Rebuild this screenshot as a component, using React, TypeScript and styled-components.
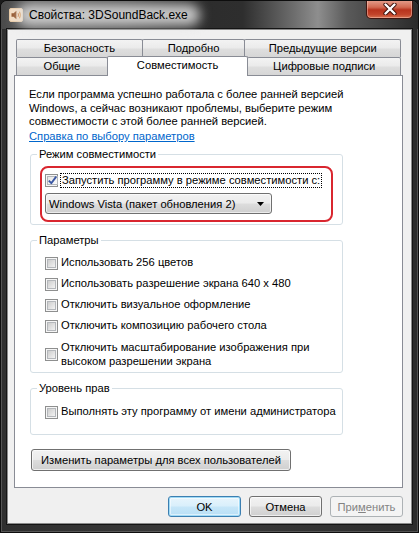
import React from "react";
import styled, { createGlobalStyle, css } from "styled-components";

const UI_FONT = `"Liberation Sans", Arial, sans-serif`;
const UI_SIZE = "11.2px";

const GlobalStyle = createGlobalStyle`
  html, body { margin: 0; padding: 0; background: #1b1b1b; }
  body { width: 419px; height: 533px; overflow: hidden; }
  #root { width: 419px; height: 533px; }
`;

/* ---------- window frame ---------- */

const Window = styled.div`
  width: 419px;
  height: 533px;
  box-sizing: border-box;
  display: flex;
  flex-direction: column;
  font-family: ${UI_FONT};
  font-size: ${UI_SIZE};
  color: #000;
  white-space: nowrap;
  background: linear-gradient(90deg, #2f2f2f 0%, #3a3a3a 50%, #2c2c2c 100%);
  border: 1px solid #0d0d0d;
  border-radius: 7px 7px 0 0;
  box-shadow: inset 0 0 0 1px rgba(255, 255, 255, 0.18);
  overflow: hidden;
`;

const TitleBar = styled.div`
  height: 28px;
  flex: none;
  display: flex;
  align-items: center;
  padding-left: 8px;
  background: linear-gradient(
    90deg,
    #4a4a4a 0%,
    #5c5c5c 8%,
    #4a4a4a 30%,
    #2c2c2c 46%,
    #2e2e2e 58%,
    #6c6c6c 70%,
    #8e8e8e 76%,
    #5a5a5a 83%,
    #2a2a2a 100%
  );
`;

const Caption = styled.span`
  position: relative;
  z-index: 0;
  margin-left: 6px;
  font-size: 12px;
  color: #000;
  &::before {
    content: "";
    position: absolute;
    inset: -4px -12px;
    z-index: -1;
    border-radius: 10px;
    background: rgba(225, 225, 225, 0.85);
    filter: blur(6px);
  }
`;

const CloseButton = styled.div`
  margin-left: auto;
  margin-right: 5px;
  align-self: flex-start;
  margin-top: -1px;
  width: 47px;
  height: 19px;
  box-sizing: border-box;
  border: 1px solid #3f1610;
  border-top: none;
  border-radius: 0 0 5px 5px;
  background: linear-gradient(#e6a18f 0%, #d26a52 40%, #b8331d 55%, #c2432a 80%, #d5704f 100%);
  box-shadow: inset 0 0 0 1px rgba(255, 210, 200, 0.45);
  display: flex;
  align-items: center;
  justify-content: center;
`;

/* ---------- client area ---------- */

const Client = styled.div`
  flex: 1;
  margin: 0 6px 8px 6px;
  border: 1px solid #8a8a8a;
  box-shadow: 0 0 0 1px #141414;
  background: #f0f0f0;
  display: flex;
  flex-direction: column;
`;

const TabStrip = styled.div`
  margin: 9px 0 0 8px;
  width: 385px;
  display: flex;
  flex-direction: column;
`;

const TabRow = styled.div`
  display: flex;
  height: 18px;
  align-items: flex-start;
`;

const Tab = styled.div<{ $w: number; $active?: boolean }>`
  box-sizing: border-box;
  width: ${(p) => p.$w}px;
  height: 18px;
  margin-left: -1px;
  &:first-child {
    margin-left: 0;
  }
  border: 1px solid #898c95;
  border-bottom: none;
  border-radius: 2px 2px 0 0;
  background: linear-gradient(#f3f3f3 0%, #ebebeb 45%, #dedede 55%, #d6d6d6 100%);
  display: flex;
  align-items: center;
  justify-content: center;
  padding-bottom: 1px;
  ${(p) =>
    p.$active &&
    css`
      position: relative;
      z-index: 1;
      height: 20px;
      margin-top: -1px;
      background: #fff;
      padding-bottom: 4px;
    `}
`;

const Panel = styled.div`
  margin-left: 6px;
  width: 389px;
  height: 413px;
  box-sizing: border-box;
  border: 1px solid #898c95;
  background: #fff;
  padding: 12px 0 0 14px;
  display: flex;
  flex-direction: column;
  align-items: flex-start;
`;

const Intro = styled.p`
  margin: 0;
  line-height: 13.5px;
`;

const HelpLink = styled.a`
  margin-top: 1.5px;
  line-height: 13.5px;
  color: #0066cc;
  text-decoration: underline;
  cursor: pointer;
`;

const Group = styled.fieldset<{ $top: number }>`
  margin: ${(p) => p.$top}px 0 0 1px;
  padding: 0;
  width: 313px;
  box-sizing: border-box;
  min-width: 0;
  border: 1px solid #d5dfe5;
  border-radius: 3px;
`;

const GroupTitle = styled.legend`
  margin-left: 6px;
  padding: 0 2px;
  line-height: 13.5px;
`;

const GroupBody = styled.div<{ $pt: number; $pb: number }>`
  display: flex;
  flex-direction: column;
  gap: 7px;
  padding: ${(p) => p.$pt}px 0 ${(p) => p.$pb}px 14px;
`;

const Highlight = styled.div`
  margin: 5px 9px 2px 9px;
  border: 2px solid #d9262f;
  border-radius: 8px;
  padding: 5px 0 6px 3px;
  display: flex;
  flex-direction: column;
  gap: 6px;
`;

const Row = styled.label<{ $tall?: boolean }>`
  display: flex;
  align-items: center;
  gap: 3px;
  height: ${(p) => (p.$tall ? "27px" : "14px")};
  line-height: 13.5px;
  ${(p) =>
    p.$tall &&
    css`
      margin-top: 1px;
    `}
`;

const FocusText = styled.span`
  margin-left: -1px;
  padding: 0 1px;
  border: 1px dotted #000;
  line-height: 13px;
`;

const CheckOuter = styled.span`
  flex: none;
  width: 13px;
  height: 13px;
  box-sizing: border-box;
  border: 1px solid #8e8f8f;
  padding: 1px;
  background: #f6f6f6;
  display: flex;
`;

const CheckInner = styled.span<{ $checked?: boolean }>`
  flex: 1;
  box-sizing: border-box;
  border: 1px solid #b4b7bb;
  background: ${(p) =>
    p.$checked
      ? "linear-gradient(135deg, #e6e6e6, #fbfbfb)"
      : "linear-gradient(135deg, #cdcdcd 0%, #e2e2e2 55%, #f3f3f3 100%)"};
  display: flex;
  align-items: center;
  justify-content: center;
`;

const Select = styled.div`
  width: 227px;
  height: 21px;
  box-sizing: border-box;
  border: 1px solid #707070;
  border-radius: 3px;
  background: linear-gradient(#f2f2f2 0%, #ebebeb 49%, #dddddd 51%, #cfcfcf 100%);
  box-shadow: inset 0 0 0 1px rgba(255, 255, 255, 0.6);
  display: flex;
  align-items: center;
  justify-content: space-between;
  padding: 0 3px 0 3px;
`;

const buttonBase = css`
  box-sizing: border-box;
  height: 21px;
  border: 1px solid #707070;
  border-radius: 3px;
  background: linear-gradient(#f2f2f2 0%, #ebebeb 49%, #dddddd 51%, #cfcfcf 100%);
  box-shadow: inset 0 0 0 1px rgba(255, 255, 255, 0.65);
  font-family: ${UI_FONT};
  font-size: ${UI_SIZE};
  color: #000;
  padding: 0;
  display: flex;
  align-items: center;
  justify-content: center;
`;

const WideButton = styled.button`
  ${buttonBase};
  height: 22px;
  width: 260px;
  margin: 14px 0 0 2px;
`;

const Footer = styled.div`
  margin-top: 8px;
  padding-right: 8px;
  display: flex;
  justify-content: flex-end;
  gap: 8px;
`;

const DialogButton = styled.button<{ $variant?: "default" | "disabled" }>`
  ${buttonBase};
  width: 73px;
  ${(p) =>
    p.$variant === "default" &&
    css`
      border-color: #3c7fb1;
      background: linear-gradient(#e8f5fc 0%, #d9effb 48%, #c6e6f8 52%, #b8dff5 100%);
      box-shadow: inset 0 0 0 1px #9fdaf6, inset 0 0 0 2px rgba(255, 255, 255, 0.5);
    `}
  ${(p) =>
    p.$variant === "disabled" &&
    css`
      border-color: #adb2b5;
      background: #f4f4f4;
      box-shadow: none;
      color: #838383;
    `}
`;

const AccessKey = styled.span`
  text-decoration: underline;
`;

/* ---------- small drawings ---------- */

const SpeakerIcon = () => (
  <svg width="14" height="14" viewBox="0 0 14 14">
    <rect x="0.5" y="0.5" width="13" height="13" rx="1.5" fill="#f4dcc0" stroke="#e8c9a4" />
    <path d="M2.5 5.2 H4.6 L7.4 2.8 V11.2 L4.6 8.8 H2.5 Z" fill="#8d4a1c" />
    <path d="M9 5.2 Q10.2 7 9 8.8" fill="none" stroke="#c8681e" strokeWidth="1.1" />
    <path d="M10.4 3.8 Q12.4 7 10.4 10.2" fill="none" stroke="#d9822c" strokeWidth="1.1" />
  </svg>
);

const CloseGlyph = () => (
  <svg width="14" height="12" viewBox="0 0 14 12">
    <path
      d="M2.5 1.5 L11.5 10.5 M11.5 1.5 L2.5 10.5"
      stroke="#3a0e08"
      strokeWidth="4.2"
      strokeLinecap="round"
    />
    <path
      d="M2.5 1.5 L11.5 10.5 M11.5 1.5 L2.5 10.5"
      stroke="#ffffff"
      strokeWidth="2.4"
      strokeLinecap="round"
    />
  </svg>
);

const CheckMark = () => (
  <svg width="9" height="9" viewBox="0 0 9 9" style={{ overflow: "visible" }}>
    <path
      d="M0.8 4.6 L3.3 7.2 L8.2 0.6"
      fill="none"
      stroke="#3a57a3"
      strokeWidth="1.9"
      strokeLinejoin="round"
    />
  </svg>
);

const DropArrow = () => (
  <svg width="7" height="4" viewBox="0 0 7 4">
    <path d="M0 0 H7 L3.5 4 Z" fill="#000" />
  </svg>
);

const ArrowSlot = styled.span`
  width: 12px;
  display: flex;
  justify-content: center;
  margin-right: 2px;
`;

const CheckBox = ({ checked }: { checked?: boolean }) => (
  <CheckOuter>
    <CheckInner $checked={checked}>{checked && <CheckMark />}</CheckInner>
  </CheckOuter>
);

/* ---------- data ---------- */

const topTabs = [
  { label: "Безопасность", w: 127 },
  { label: "Подробно", w: 104 },
  { label: "Предыдущие версии", w: 157 },
];

const bottomTabs = [
  { label: "Общие", w: 92 },
  { label: "Совместимость", w: 142, active: true },
  { label: "Цифровые подписи", w: 154 },
];

const settings = [
  "Использовать 256 цветов",
  "Использовать разрешение экрана 640 x 480",
  "Отключить визуальное оформление",
  "Отключить композицию рабочего стола",
];

export default function App() {
  return (
    <>
      <GlobalStyle />
      <Window>
        <TitleBar>
          <SpeakerIcon />
          <Caption>Свойства: 3DSoundBack.exe</Caption>
          <CloseButton>
            <CloseGlyph />
          </CloseButton>
        </TitleBar>

        <Client>
          <TabStrip>
            <TabRow>
              {topTabs.map((t) => (
                <Tab key={t.label} $w={t.w}>
                  {t.label}
                </Tab>
              ))}
            </TabRow>
            <TabRow>
              {bottomTabs.map((t) => (
                <Tab key={t.label} $w={t.w} $active={t.active}>
                  {t.label}
                </Tab>
              ))}
            </TabRow>
          </TabStrip>

          <Panel>
            <Intro>
              Если программа успешно работала с более ранней версией
              <br />
              Windows, а сейчас возникают проблемы, выберите режим
              <br />
              совместимости с этой более ранней версией.
            </Intro>
            <HelpLink>Справка по выбору параметров</HelpLink>

            <Group $top={4}>
              <GroupTitle>Режим совместимости</GroupTitle>
              <Highlight>
                <Row>
                  <CheckBox checked />
                  <FocusText>Запустить программу в режиме совместимости с:</FocusText>
                </Row>
                <Select>
                  <span>Windows Vista (пакет обновления 2)</span>
                  <ArrowSlot>
                    <DropArrow />
                  </ArrowSlot>
                </Select>
              </Highlight>
            </Group>

            <Group $top={9}>
              <GroupTitle>Параметры</GroupTitle>
              <GroupBody $pt={8.5} $pb={4}>
                {settings.map((s) => (
                  <Row key={s}>
                    <CheckBox />
                    <span>{s}</span>
                  </Row>
                ))}
                <Row $tall>
                  <CheckBox />
                  <span>
                    Отключить масштабирование изображения при
                    <br />
                    высоком разрешении экрана
                  </span>
                </Row>
              </GroupBody>
            </Group>

            <Group $top={9}>
              <GroupTitle>Уровень прав</GroupTitle>
              <GroupBody $pt={9.5} $pb={15}>
                <Row>
                  <CheckBox />
                  <span>Выполнять эту программу от имени администратора</span>
                </Row>
              </GroupBody>
            </Group>

            <WideButton>Изменить параметры для всех пользователей</WideButton>
          </Panel>

          <Footer>
            <DialogButton $variant="default">OK</DialogButton>
            <DialogButton>Отмена</DialogButton>
            <DialogButton $variant="disabled">
              При<AccessKey>м</AccessKey>енить
            </DialogButton>
          </Footer>
        </Client>
      </Window>
    </>
  );
}
